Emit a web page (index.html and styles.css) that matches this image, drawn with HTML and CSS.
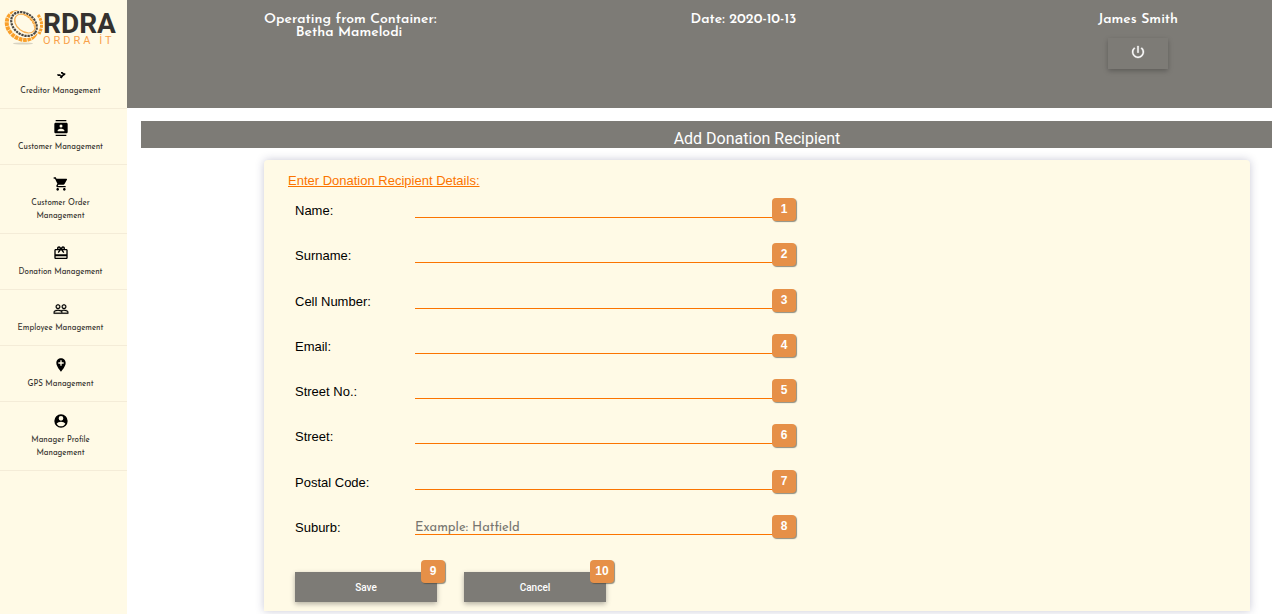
FILE: index.html
```html
<!DOCTYPE html>
<html lang="en">
<head>
<meta charset="utf-8">
<title>Add Donation Recipient</title>
<link rel="stylesheet" href="styles.css">
</head>
<body>
<aside class="sidebar">
  <a class="logo" href="#" aria-label="Ordra IT">
    <svg class="logo-art" viewBox="0 0 122 53">
      <ellipse cx="23" cy="43.500" rx="10" ry="1" fill="#d8d3c2"/>
      <g fill="none">
        <ellipse cx="21.500" cy="26" rx="16" ry="12.500" transform="rotate(38 21.500 26)" stroke="#f9a02b" stroke-width="4" stroke-dasharray="3.600 .7"/>
        <ellipse cx="24" cy="24" rx="14" ry="10.500" transform="rotate(38 24 24)" stroke="#fffae6" stroke-width="4"/>
        <ellipse cx="24" cy="24" rx="14" ry="10.500" transform="rotate(38 24 24)" stroke="#4a4742" stroke-width="2.200" stroke-dasharray="2.300 .8"/>
        <ellipse cx="25" cy="23.500" rx="11.500" ry="8" transform="rotate(38 25 23.500)" stroke="#f7b052" stroke-width="1.200"/>
        <path d="M38 15c4 5 5 12 1 19" stroke="#f9a02b" stroke-width="3" stroke-dasharray="2.800 .8"/>
      </g>
      <text class="logo-name" x="43" y="33">RDRA</text>
      <text class="logo-sub" x="43" y="44">ORDRA İT</text>
    </svg>
  </a>
  <nav class="menu">
    <a class="item" href="#">
      <svg class="icon" viewBox="0 0 16 16"><path d="M4 10.200h3.500v1H9c.8 0 .8-1.200 0-1.400l-1-.3V8h1.500l1.300 1.300h1.500v1.500l-2 1.200-1.800 2.400-1.900-1.200 1-1.200H4.800z"/></svg>
      <span>Creditor Management</span>
    </a>
    <a class="item" href="#">
      <svg class="icon" viewBox="0 0 24 24"><path d="M20 0H4v2h16V0zM4 24h16v-2H4v2zM20 4H4c-1.100 0-2 .9-2 2v12c0 1.100.9 2 2 2h16c1.100 0 2-.9 2-2V6c0-1.100-.9-2-2-2zm-8 2.750a2.250 2.250 0 1 1 0 4.500 2.250 2.250 0 0 1 0-4.500zM17 17H7v-1.500c0-1.670 3.330-2.500 5-2.500s5 .83 5 2.500V17z"/></svg>
      <span>Customer Management</span>
    </a>
    <a class="item" href="#">
      <svg class="icon" viewBox="0 0 24 24"><path d="M7 18c-1.100 0-1.990.9-1.990 2S5.900 22 7 22s2-.9 2-2-.9-2-2-2zM1 2v2h2l3.600 7.590-1.350 2.450c-.16.28-.25.61-.25.960 0 1.100.9 2 2 2h12v-2H7.420c-.14 0-.25-.11-.25-.25l.03-.12.900-1.630h7.450c.75 0 1.410-.41 1.750-1.030l3.580-6.490A1 1 0 0 0 20 4H5.210l-.94-2H1zm16 16c-1.100 0-1.990.9-1.990 2s.89 2 1.990 2 2-.9 2-2-.9-2-2-2z"/></svg>
      <span>Customer Order<br>Management</span>
    </a>
    <a class="item" href="#">
      <svg class="icon" viewBox="0 0 24 24"><path d="M20 6h-2.180c.11-.31.18-.65.18-1 0-1.660-1.340-3-3-3-1.050 0-1.960.54-2.500 1.350l-.5.670-.5-.68C10.960 2.540 10.050 2 9 2 7.340 2 6 3.340 6 5c0 .35.070.69.180 1H4c-1.110 0-1.990.89-1.990 2L2 19c0 1.110.89 2 2 2h16c1.110 0 2-.89 2-2V8c0-1.110-.89-2-2-2zm-5-2c.55 0 1 .45 1 1s-.45 1-1 1-1-.45-1-1 .45-1 1-1zM9 4c.55 0 1 .45 1 1s-.45 1-1 1-1-.45-1-1 .45-1 1-1zm11 15H4v-2h16v2zm0-5H4V8h5.080L7 10.830 8.620 12 12 7.400l3.380 4.600L17 10.830 14.920 8H20v6z"/></svg>
      <span>Donation Management</span>
    </a>
    <a class="item" href="#">
      <svg class="icon icon-outline" viewBox="0 0 24 24"><path d="M16.500 13c-1.200 0-3.070.34-4.500 1-1.430-.67-3.300-1-4.500-1C5.330 13 1 14.080 1 16.250V19h22v-2.750C23 14.080 18.670 13 16.500 13zm-4 4.500h-10v-1.250c0-.54 2.560-1.750 5-1.750s5 1.210 5 1.750v1.250zm9 0H14v-1.250c0-.46-.2-.86-.52-1.220.88-.3 1.960-.53 3.020-.53 2.440 0 5 1.210 5 1.750v1.250zM7.500 12c1.930 0 3.500-1.570 3.500-3.500S9.430 5 7.500 5 4 6.570 4 8.500 5.570 12 7.500 12zm0-5.500c1.100 0 2 .9 2 2s-.9 2-2 2-2-.9-2-2 .9-2 2-2zm9 5.500c1.930 0 3.500-1.570 3.500-3.500S18.430 5 16.500 5 13 6.570 13 8.500s1.570 3.500 3.500 3.500zm0-5.500c1.100 0 2 .9 2 2s-.9 2-2 2-2-.9-2-2 .9-2 2-2z"/></svg>
      <span>Employee Management</span>
    </a>
    <a class="item" href="#">
      <svg class="icon" viewBox="0 0 24 24"><path d="M12 2C8.140 2 5 5.140 5 9c0 5.250 7 13 7 13s7-7.750 7-13c0-3.860-3.140-7-7-7zm4 8h-3v3h-2v-3H8V8h3V5h2v3h3v2z"/></svg>
      <span>GPS Management</span>
    </a>
    <a class="item" href="#">
      <svg class="icon" viewBox="0 0 24 24"><path d="M12 2a10 10 0 1 0 0 20 10 10 0 0 0 0-20zM12 4.500a3.500 3.500 0 1 1 0 7 3.500 3.500 0 0 1 0-7zM12 20c-3 0-5.200-1.700-6.500-4 .7-1.900 4.300-3 6.500-3s5.800 1.100 6.500 3c-1.300 2.300-3.500 4-6.500 4z"/></svg>
      <span>Manager Profile<br>Management</span>
    </a>
  </nav>
</aside>
<div class="page">
  <header class="topbar">
    <div class="cell">Operating from Container:<br>Betha Mamelodi</div>
    <div class="cell">Date: 2020-10-13</div>
    <div class="cell">
      James Smith
      <button class="power" type="button" aria-label="Log out">
        <svg class="icon" viewBox="0 0 24 24"><path d="M13 3h-2v10h2V3zm4.830 2.170l-1.420 1.420A6.920 6.920 0 0 1 19 12c0 3.870-3.130 7-7 7s-7-3.130-7-7c0-2.190 1.010-4.140 2.580-5.420L6.170 5.170A8.932 8.932 0 0 0 3 12a9 9 0 0 0 18 0c0-2.740-1.230-5.180-3.170-6.830z"/></svg>
      </button>
    </div>
  </header>
  <main class="content">
    <h1 class="title">Add Donation Recipient</h1>
    <form class="card">
      <h2 class="legend">Enter Donation Recipient Details:</h2>
      <div class="fields">
        <div class="field"><label for="name">Name:</label><input id="name" type="text"><span class="badge">1</span></div>
        <div class="field"><label for="surname">Surname:</label><input id="surname" type="text"><span class="badge">2</span></div>
        <div class="field"><label for="cell">Cell Number:</label><input id="cell" type="tel"><span class="badge">3</span></div>
        <div class="field"><label for="email">Email:</label><input id="email" type="email"><span class="badge">4</span></div>
        <div class="field"><label for="streetno">Street No.:</label><input id="streetno" type="text"><span class="badge">5</span></div>
        <div class="field"><label for="street">Street:</label><input id="street" type="text"><span class="badge">6</span></div>
        <div class="field"><label for="postal">Postal Code:</label><input id="postal" type="text"><span class="badge">7</span></div>
        <div class="field"><label for="suburb">Suburb:</label><input id="suburb" type="text" placeholder="Example: Hatfield"><span class="badge">8</span></div>
      </div>
      <div class="actions">
        <div class="action"><button class="btn" type="button">Save</button><span class="badge">9</span></div>
        <div class="action"><button class="btn" type="button">Cancel</button><span class="badge">10</span></div>
      </div>
    </form>
  </main>
</div>
</body>
</html>
```
FILE: styles.css
```css
:root {
  --grey: #7d7b76;
  --cream: #fffae6;
  --orange: #fb7400;
}

* { box-sizing: border-box; }

body {
  display: flex;
  min-height: 100vh;
  margin: 0;
  background: #fff;
  font-family: "Josefin Sans", Lato, sans-serif;
}

.sidebar {
  flex: 0 0 127px;
  background: var(--cream);
}

.logo { display: block; }

.logo-art {
  display: block;
  width: 122px;
  height: 53px;
}

.logo-name {
  fill: #35322f;
  font: 700 28px Roboto, sans-serif;
}

.logo-sub {
  fill: #f9a04a;
  font: 400 11px Roboto, sans-serif;
  letter-spacing: 3px;
}

.item {
  display: flex;
  flex-direction: column;
  align-items: center;
  gap: 5px;
  padding: 11px 6px 10px 0;
  border-bottom: 1px solid #f4ecd8;
  color: #33312d;
  font-size: 8px;
  line-height: 13px;
  text-align: center;
  text-decoration: none;
}

.icon {
  display: block;
  width: 16px;
  height: 16px;
  fill: #000;
}

.icon-outline {
  stroke: #000;
  stroke-width: .4px;
}

.page {
  flex: 1;
  min-width: 0;
}

.topbar {
  display: flex;
  justify-content: space-between;
  min-height: 108px;
  padding: 13px 49px 0 137px;
  background: var(--grey);
  color: #fff;
  font-size: 14px;
  font-weight: 600;
  line-height: 13px;
  text-align: center;
}

.cell {
  display: flow-root;
  width: 170px;
  white-space: nowrap;
}

.power {
  display: grid;
  place-items: center;
  width: 60px;
  height: 31px;
  margin: 12px auto 0;
  padding: 0 0 4px;
  border: 0;
  background: var(--grey);
  box-shadow: 0 2px 5px rgba(0, 0, 0, .25);
}

.power .icon {
  fill: #fff;
  stroke: #fff;
  stroke-width: .5px;
}

.content { padding: 13px 0 0 14px; }

.title {
  margin: 0;
  padding: 8px 0 0 101px;
  background: var(--grey);
  color: #fff;
  font: 400 16px/19px Roboto, sans-serif;
  text-align: center;
}

.card {
  margin: 12px 22px 0 123px;
  padding: 13px 24px 9px;
  border-radius: 4px 4px 0 0;
  background: var(--cream);
  box-shadow: 0 0 8px rgba(40, 40, 90, .25);
  font-family: "Liberation Sans", sans-serif;
}

.legend {
  margin: 0;
  color: var(--orange);
  font-size: 13px;
  font-weight: 400;
  line-height: 15px;
  text-decoration: underline;
}

.fields {
  display: grid;
  grid-template-rows: repeat(8, 1fr);
  height: 362px;
}

.field {
  position: relative;
  display: grid;
  grid-template-columns: 120px 370px;
  align-items: start;
  width: 508px;
  padding-left: 7px;
}

.field label {
  padding-top: 13px;
  font-size: 13px;
  line-height: 20px;
}

.field input {
  height: 30px;
  padding: 16px 0 0;
  border: 0;
  border-bottom: 1px solid var(--orange);
  background: transparent;
  font: 13px/13px "Josefin Sans", Lato, sans-serif;
}

.field input::placeholder { color: #77756f; }

.badge {
  position: absolute;
  top: 10px;
  right: 0;
  width: 24px;
  height: 23px;
  border-radius: 4px;
  background: #e69048;
  box-shadow: 1px 1px 1px rgba(70, 70, 60, .6);
  color: #fff;
  font: 700 12px/23px "Liberation Sans", sans-serif;
  text-align: center;
}

.actions {
  display: flex;
  gap: 27px;
  padding: 22px 0 0 7px;
}

.action { position: relative; }

.action .badge {
  top: -12px;
  right: -8px;
}

.btn {
  display: block;
  width: 142px;
  height: 30px;
  border: 0;
  background: var(--grey);
  box-shadow: 0 2px 5px rgba(0, 0, 0, .3);
  color: #fff;
  font: 500 10px Roboto, sans-serif;
}
```
